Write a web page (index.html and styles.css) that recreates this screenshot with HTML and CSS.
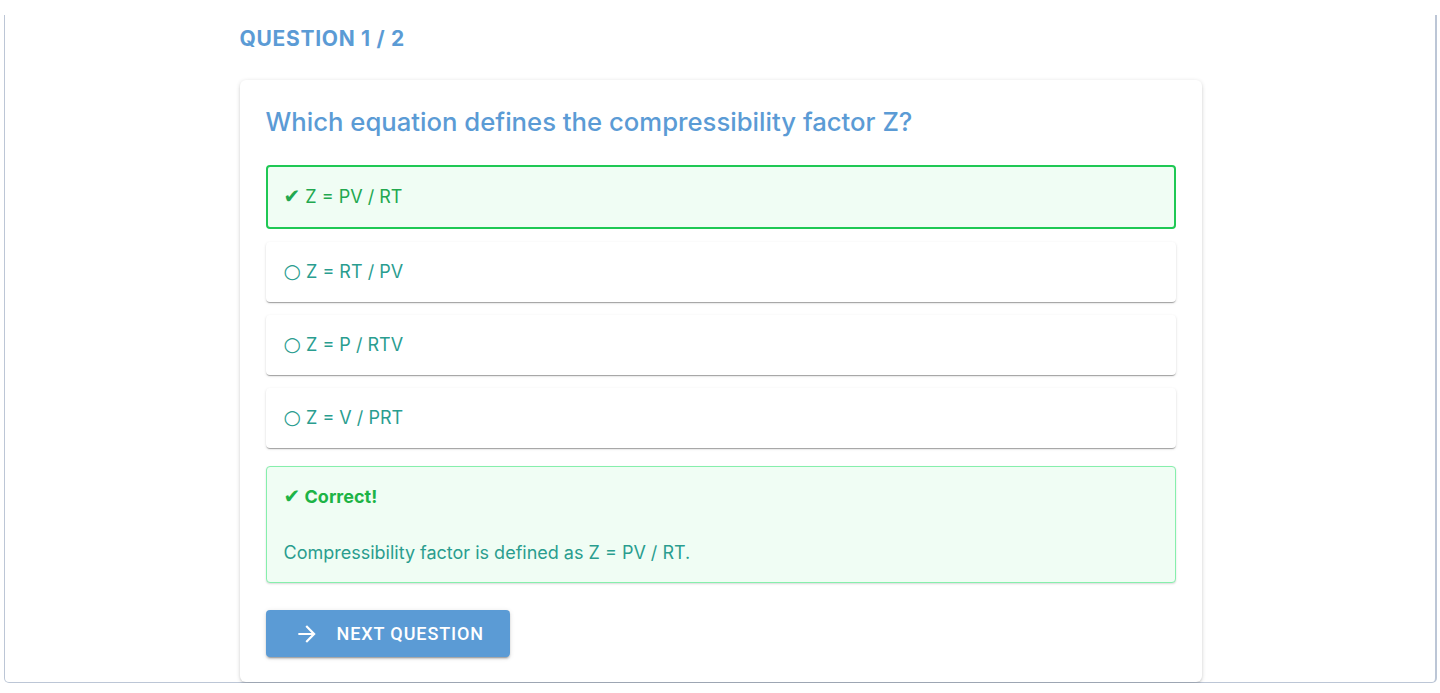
FILE: index.html
```html
<!DOCTYPE html>
<html lang="en">
<head>
    <meta charset="UTF-8">
    <meta name="viewport" content="width=device-width, initial-scale=1.0">
    <title>Quiz</title>
    <link rel="stylesheet" href="styles.css">
</head>
<body>
    <div class="frame">
        <div class="quiz">
            <h2 class="counter">QUESTION 1 / 2</h2>

            <div class="card">
                <h1 class="question">Which equation defines the compressibility factor Z?</h1>

                <div class="options">
                    <div class="option correct"><span class="mark check">✔</span> Z = PV / RT</div>
                    <div class="option"><span class="mark circle">○</span> Z = RT / PV</div>
                    <div class="option"><span class="mark circle">○</span> Z = P / RTV</div>
                    <div class="option"><span class="mark circle">○</span> Z = V / PRT</div>
                </div>

                <div class="feedback">
                    <p class="feedback-title"><span class="mark check">✔</span> Correct!</p>
                    <p class="feedback-text">Compressibility factor is defined as Z = PV / RT.</p>
                </div>

                <button type="button" class="btn">
                    <svg width="24" height="24" viewBox="0 0 24 24" aria-hidden="true">
                        <path d="M12 4l-1.41 1.41L16.17 11H4v2h12.17l-5.58 5.59L12 20l8-8z" fill="currentColor"/>
                    </svg>
                    <span>Next Question</span>
                </button>
            </div>
        </div>
    </div>
</body>
</html>
```

FILE: styles.css
```css
body {
    margin: 0;
    background: #ffffff;
    font-family: Inter, "Noto Sans", sans-serif;
}

.frame {
    margin: 15px 3px 0 4px;
    height: 668px;
    box-sizing: border-box;
    border: 1px solid #bcc6d6;
    border-top: none;
    border-right-width: 2px;
    border-radius: 0 0 5px 5px;
}

.quiz {
    width: 962px;
    margin: 0 auto;
    padding-left: 1px;
}

.counter {
    margin: 0;
    padding: 11px 0 0 0;
    height: 54px;
    font-size: 21px;
    font-weight: 700;
    line-height: 25px;
    letter-spacing: 0.7px;
    color: #5b9bd5;
}

.card {
    background: #ffffff;
    border-radius: 6px;
    padding: 26px 26px 25px 26px;
    box-shadow: 0 1px 4px rgba(0, 0, 0, 0.16), 0 2px 2px rgba(0, 0, 0, 0.08);
}

.question {
    margin: 0 0 27px 0;
    font-size: 25.7px;
    font-weight: 500;
    line-height: 32px;
    color: #5b9bd5;
}

.options {
    display: flex;
    flex-direction: column;
    gap: 13px;
}

.option {
    padding: 18px;
    height: 24px;
    line-height: 24px;
    font-size: 18px;
    color: #2a9d8f;
    background: #ffffff;
    border-radius: 4px;
    box-shadow: 0 2px 1px -1px rgba(0, 0, 0, 0.2), 0 1px 1px 0 rgba(0, 0, 0, 0.14), 0 1px 3px 0 rgba(0, 0, 0, 0.12);
}

.option.correct {
    padding: 18px 16px;
    border: 2px solid #1fc854;
    background: #f0fdf4;
    color: #22a84f;
    box-shadow: none;
}

.mark {
    font-family: "DejaVu Sans", sans-serif;
    line-height: 1;
}

.mark.check {
    font-size: 20px;
}

.mark.circle {
    font-size: 20px;
}

.feedback {
    margin-top: 18px;
    padding: 18px 17px 17px 17px;
    border: 1px solid #86efac;
    border-radius: 4px;
    background: #f0fdf4;
    box-shadow: 0 1px 2px rgba(0, 0, 0, 0.15);
}

.feedback p {
    margin: 0;
    height: 24px;
    font-size: 18px;
    line-height: 24px;
}

.feedback-title {
    font-weight: 700;
    color: #1db446;
}

.feedback-text {
    margin-top: 32px !important;
    color: #2a9d8f;
}

.btn {
    margin-top: 27px;
    display: flex;
    align-items: center;
    gap: 17px;
    height: 47px;
    padding: 0 26px 0 28px;
    border: none;
    border-radius: 4px;
    background: #5b9bd5;
    color: #ffffff;
    font-family: Roboto, sans-serif;
    font-size: 18px;
    font-weight: 500;
    letter-spacing: 0.9px;
    text-transform: uppercase;
    cursor: pointer;
    box-shadow: 0 3px 1px -2px rgba(0, 0, 0, 0.2), 0 2px 2px 0 rgba(0, 0, 0, 0.14), 0 1px 5px 0 rgba(0, 0, 0, 0.12);
}

.btn svg {
    width: 26px;
    height: 26px;
}
```
